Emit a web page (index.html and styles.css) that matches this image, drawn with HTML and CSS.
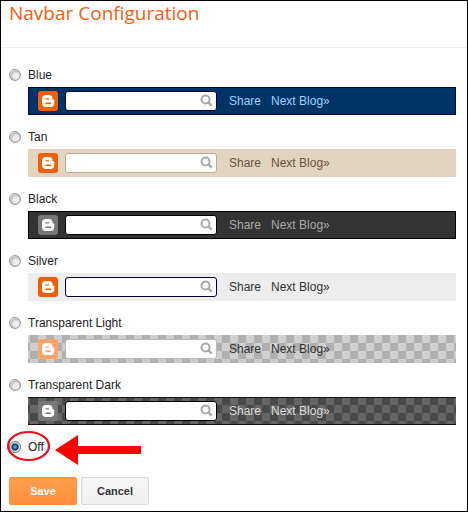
FILE: index.html
```html
<!DOCTYPE html>
<html lang="en">
<head>
  <meta charset="UTF-8">
  <meta name="viewport" content="width=device-width, initial-scale=1.0">
  <title>Navbar Configuration</title>
  <link rel="stylesheet" href="styles.css">
</head>
<body>

<!-- Shared icons -->
<svg class="sprite" aria-hidden="true">
  <symbol id="blogger" viewBox="0 0 20 20">
    <rect width="20" height="20" rx="3" fill="currentColor"/>
    <path fill="#fff" fill-rule="evenodd" d="M8 4h3a3.500 3.500 0 0 1 3.500 3.500c0 .8.200 1 .8 1s1 .3 1 1V12a4 4 0 0 1-4 4H8a4 4 0 0 1-4-4V8a4 4 0 0 1 4-4zM8 7.200a.7.7 0 0 0 0 1.400h2.500a.7.7 0 0 0 0-1.400zM8 11.500a.7.7 0 0 0 0 1.400h4.500a.7.7 0 0 0 0-1.400z"/>
  </symbol>
  <symbol id="search" viewBox="0 0 13 13">
    <circle cx="5.500" cy="5.500" r="4" fill="none" stroke="#aaa" stroke-width="2"/>
    <path d="M8.500 8.500l3.200 3.200" stroke="#aaa" stroke-width="2.400"/>
  </symbol>
</svg>

<form class="dialog">
  <h1>Navbar Configuration</h1>

  <div class="options">
    <div class="option">
      <input type="radio" name="navbar" id="blue">
      <label for="blue">Blue</label>
      <div class="navbar blue">
        <svg class="logo"><use href="#blogger"/></svg>
        <div class="search">
          <input type="text" aria-label="Search blue navbar">
          <svg><use href="#search"/></svg>
        </div>
        <a href="#">Share</a>
        <a href="#">Next Blog»</a>
      </div>
    </div>

    <div class="option">
      <input type="radio" name="navbar" id="tan">
      <label for="tan">Tan</label>
      <div class="navbar tan">
        <svg class="logo"><use href="#blogger"/></svg>
        <div class="search">
          <input type="text" aria-label="Search tan navbar">
          <svg><use href="#search"/></svg>
        </div>
        <a href="#">Share</a>
        <a href="#">Next Blog»</a>
      </div>
    </div>

    <div class="option">
      <input type="radio" name="navbar" id="black">
      <label for="black">Black</label>
      <div class="navbar black">
        <svg class="logo"><use href="#blogger"/></svg>
        <div class="search">
          <input type="text" aria-label="Search black navbar">
          <svg><use href="#search"/></svg>
        </div>
        <a href="#">Share</a>
        <a href="#">Next Blog»</a>
      </div>
    </div>

    <div class="option">
      <input type="radio" name="navbar" id="silver">
      <label for="silver">Silver</label>
      <div class="navbar silver">
        <svg class="logo"><use href="#blogger"/></svg>
        <div class="search">
          <input type="text" aria-label="Search silver navbar">
          <svg><use href="#search"/></svg>
        </div>
        <a href="#">Share</a>
        <a href="#">Next Blog»</a>
      </div>
    </div>

    <div class="option">
      <input type="radio" name="navbar" id="light">
      <label for="light">Transparent Light</label>
      <div class="navbar light">
        <svg class="logo"><use href="#blogger"/></svg>
        <div class="search">
          <input type="text" aria-label="Search light navbar">
          <svg><use href="#search"/></svg>
        </div>
        <a href="#">Share</a>
        <a href="#">Next Blog»</a>
      </div>
    </div>

    <div class="option">
      <input type="radio" name="navbar" id="dark">
      <label for="dark">Transparent Dark</label>
      <div class="navbar dark">
        <svg class="logo"><use href="#blogger"/></svg>
        <div class="search">
          <input type="text" aria-label="Search dark navbar">
          <svg><use href="#search"/></svg>
        </div>
        <a href="#">Share</a>
        <a href="#">Next Blog»</a>
      </div>
    </div>

    <div class="option">
      <input type="radio" name="navbar" id="off" checked>
      <label for="off">Off</label>
      <!-- Red circle and arrow pointing at "Off" -->
      <svg class="marker" viewBox="0 0 136 32" aria-hidden="true">
        <ellipse cx="21.500" cy="15" rx="20.500" ry="14" fill="none" stroke="#ee0a18" stroke-width="2.200"/>
        <path d="M48 19L71 4v11h63v8H71v11z" fill="#f00"/>
      </svg>
    </div>
  </div>

  <div class="buttons">
    <button type="submit" class="save">Save</button>
    <button type="button">Cancel</button>
  </div>
</form>

</body>
</html>
```
FILE: styles.css
```css
* {
  box-sizing: border-box;
}

body {
  margin: 0;
  background: #fff;
  color: #222;
  font-family: "Liberation Sans", Arial, sans-serif;
  font-size: 12px;
  line-height: 16px;
}

.sprite {
  display: none;
}

.dialog {
  min-height: 100vh;
  border: 1px solid #000;
}

h1 {
  margin: 0;
  padding: 0 8px 21px;
  border-bottom: 1px solid #ebebeb;
  color: #f2600f;
  font-family: "Open Sans", sans-serif;
  font-size: 19px;
  font-weight: 400;
  line-height: 25px;
}

.options {
  display: grid;
  gap: 14px;
  padding: 19px 11px 0 8px;
}

.option {
  display: grid;
  grid-template-columns: 12px 1fr;
  column-gap: 7px;
  row-gap: 4px;
  align-items: center;
  position: relative;
}

input[type="radio"] {
  appearance: none;
  width: 12px;
  height: 12px;
  margin: 0;
  border: 1px solid #999;
  border-radius: 50%;
  background: radial-gradient(circle at 60% 60%, #eee 30%, #bbb 60%, #f4f4f4 75%);
}

input[type="radio"]:checked {
  border-color: #777;
  background: radial-gradient(circle at 50% 50%, #4fb5e0 5%, #12345c 42%, #ddd 60%);
}

.navbar {
  grid-column: 2;
  display: flex;
  align-items: center;
  height: 28px;
  padding-left: 10px;
  background: #ededed;
}

.logo {
  width: 20px;
  height: 20px;
  margin-right: 7px;
  color: #f06000;
}

.search {
  position: relative;
  width: 152px;
  height: 20px;
  margin-right: 12px;
}

.search input {
  display: block;
  width: 100%;
  height: 100%;
  padding: 0 20px 0 4px;
  border: 1px solid #bbb;
  border-radius: 3px;
  background: #fff;
}

.search svg {
  position: absolute;
  top: 3px;
  right: 4px;
  width: 13px;
  height: 13px;
}

.navbar a {
  margin-right: 10px;
  color: #333;
  text-decoration: none;
}

.blue {
  background: #036;
  box-shadow: inset 0 0 0 1px #004;
}

.blue a {
  color: #9cd2fa;
}

.blue input {
  border-color: #004;
}

.tan {
  background: #e1d4c0;
}

.tan a {
  color: #6b5143;
}

.tan input {
  border-color: #c0aa8c;
}

.black {
  background: #333;
  box-shadow: inset 0 0 0 1px #000;
}

.black .logo,
.dark .logo {
  color: #777;
}

.black a {
  color: #aaa;
}

.black input,
.dark input {
  border-color: #000;
}

.silver input {
  border-color: #003;
}

.light {
  background: repeating-conic-gradient(#cfcfcf 0 25%, #b0b0b0 0 50%) 2px 0 / 16px 16px;
}

.light .logo {
  color: #ffa468;
}

.dark {
  background: repeating-conic-gradient(#666 0 25%, #494949 0 50%) 2px 0 / 16px 16px;
  box-shadow: inset 0 1px #111, inset 0 -1px #111;
}

.dark a {
  color: #ddd;
}

.marker {
  position: absolute;
  top: -8px;
  left: -2px;
  width: 136px;
  height: 32px;
  overflow: visible;
}

.buttons {
  display: flex;
  gap: 4px;
  padding: 22px 8px 6px;
}

button {
  width: 68px;
  height: 28px;
  padding: 0;
  border: 1px solid #d8d8d8;
  border-radius: 2px;
  background: linear-gradient(#f6f6f6, #f0f0f0);
  color: #333;
  font: bold 11px "Liberation Sans", Arial, sans-serif;
}

.save {
  border-color: #fb8f3d;
  background: linear-gradient(#ffa04c, #ff8e3e);
  color: #fff;
}
```
